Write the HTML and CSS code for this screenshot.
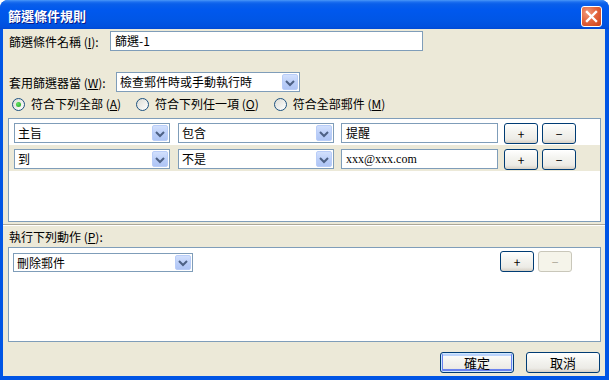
FILE: index.html
```html
<!DOCTYPE html>
<html lang="zh-Hant">
<head>
    <meta charset="UTF-8">
    <title>篩選條件規則</title>
    <link rel="stylesheet" href="styles.css">
</head>
<body>

<div class="window">
    <div class="titlebar">
        <span class="title">篩選條件規則</span>
        <span class="close">
            <svg width="19" height="19" viewBox="0 0 19 19"><path d="M5 5 L14 14 M14 5 L5 14" stroke="#fff" stroke-width="2.4" stroke-linecap="square"/></svg>
        </span>
    </div>

    <div class="client">
        <div class="row name-row">
            <label class="name-label">篩選條件名稱 (<u>I</u>):</label>
            <div class="textbox name-box">篩選-1</div>
        </div>

        <div class="row when-row">
            <label class="when-label">套用篩選器當 (<u>W</u>):</label>
            <div class="combo when-combo">
                <span class="combo-text">檢查郵件時或手動執行時</span>
                <span class="combo-btn"><svg width="14" height="15" viewBox="0 0 14 15"><polyline points="3,6 7,10 11,6" fill="none" stroke="#4d6185" stroke-width="2"/></svg></span>
            </div>
        </div>

        <div class="radios">
            <span class="radio-item"><span class="radio checked"></span>符合下列全部 (<u>A</u>)</span>
            <span class="radio-item"><span class="radio"></span>符合下列任一項 (<u>O</u>)</span>
            <span class="radio-item"><span class="radio"></span>符合全部郵件 (<u>M</u>)</span>
        </div>

        <div class="listbox conditions">
            <div class="cond">
                <div class="combo field">
                    <span class="combo-text">主旨</span>
                    <span class="combo-btn"><svg width="14" height="15" viewBox="0 0 14 15"><polyline points="3,6 7,10 11,6" fill="none" stroke="#4d6185" stroke-width="2"/></svg></span>
                </div>
                <div class="combo field second">
                    <span class="combo-text">包含</span>
                    <span class="combo-btn"><svg width="14" height="15" viewBox="0 0 14 15"><polyline points="3,6 7,10 11,6" fill="none" stroke="#4d6185" stroke-width="2"/></svg></span>
                </div>
                <div class="textbox value">提醒</div>
                <button class="btn small plus">+</button>
                <button class="btn small minus">−</button>
            </div>
            <div class="cond alt">
                <div class="combo field">
                    <span class="combo-text">到</span>
                    <span class="combo-btn"><svg width="14" height="15" viewBox="0 0 14 15"><polyline points="3,6 7,10 11,6" fill="none" stroke="#4d6185" stroke-width="2"/></svg></span>
                </div>
                <div class="combo field second">
                    <span class="combo-text">不是</span>
                    <span class="combo-btn"><svg width="14" height="15" viewBox="0 0 14 15"><polyline points="3,6 7,10 11,6" fill="none" stroke="#4d6185" stroke-width="2"/></svg></span>
                </div>
                <div class="textbox value latin">xxx@xxx.com</div>
                <button class="btn small plus">+</button>
                <button class="btn small minus">−</button>
            </div>
        </div>

        <div class="splitter"></div>

        <div class="action-label">執行下列動作 (<u>P</u>):</div>

        <div class="listbox actions">
            <div class="action">
                <div class="combo action-combo">
                    <span class="combo-text">刪除郵件</span>
                    <span class="combo-btn"><svg width="14" height="15" viewBox="0 0 14 15"><polyline points="3,6 7,10 11,6" fill="none" stroke="#4d6185" stroke-width="2"/></svg></span>
                </div>
                <button class="btn small plus action-plus">+</button>
                <button class="btn small minus" disabled>−</button>
            </div>
        </div>

        <div class="footer">
            <button class="btn wide default">確定</button>
            <button class="btn wide">取消</button>
        </div>
    </div>
</div>

</body>
</html>
```

FILE: styles.css
```css
* { box-sizing: border-box; }

body {
    margin: 0;
    background: #fff;
    font-family: "Noto Sans CJK TC", "Liberation Sans", sans-serif;
    font-size: 12px;
    color: #000;
}

u { text-decoration: underline; text-underline-offset: 1px; }

/* window frame */
.window {
    width: 609px;
    height: 380px;
    display: flex;
    flex-direction: column;
    background: #0055e5;
    border-radius: 8px 8px 0 0;
    overflow: hidden;
}

.titlebar {
    height: 29px;
    flex: none;
    display: flex;
    align-items: flex-start;
    padding: 0 7px 0 8px;
    background: linear-gradient(to bottom, #4a98f8 0, #1c6ff0 2px, #0a5fea 4px, #0058ee 10px, #0056e6 20px, #0050de 27px, #0049d4 29px);
}

.title {
    flex: 1;
    margin-top: 7px;
    line-height: 17px;
    font-size: 13px;
    font-weight: bold;
    color: #fff;
    text-shadow: 1px 1px 0 #0a1a8a;
}

.close {
    width: 21px;
    height: 21px;
    margin-top: 6px;
    border: 1px solid #fff;
    border-radius: 3px;
    background: radial-gradient(circle at 30% 30%, #f09a7c 0, #e4663e 45%, #cc4018 100%);
    display: flex;
    align-items: center;
    justify-content: center;
}

.client {
    flex: 1;
    margin: 0 4px 4px 3px;
    background: #ece9d8;
    display: flex;
    flex-direction: column;
}

/* top fields */
.row {
    display: flex;
    align-items: center;
    padding-left: 6px;
}

.name-row { margin-top: 2px; height: 20px; }
.name-label { width: 101px; }
.name-box { width: 313px; height: 20px; }

.when-row { margin-top: 21px; height: 20px; }
.when-label { width: 107px; }
.when-combo { width: 184px; height: 20px; }

.textbox {
    border: 1px solid #7f9db9;
    background: #fff;
    padding-left: 4px;
    line-height: 18px;
    white-space: nowrap;
}

.latin { font-family: "Liberation Serif", serif; }

.combo {
    display: flex;
    border: 1px solid #7f9db9;
    background: #fff;
    padding: 1px;
}

.combo-text {
    flex: 1;
    padding-left: 2px;
    line-height: 16px;
    white-space: nowrap;
}

.combo-btn {
    width: 16px;
    flex: none;
    display: flex;
    align-items: center;
    justify-content: center;
    border: 1px solid #b9cdf8;
    border-radius: 2px;
    background: linear-gradient(to bottom, #d2e0fd, #b9cdf8 60%, #afc5f5);
}

/* radios */
.radios {
    margin-top: 5px;
    height: 14px;
    display: flex;
    align-items: center;
    padding-left: 9px;
}

.radio-item {
    display: flex;
    align-items: center;
    margin-right: 15px;
    line-height: 14px;
}

.radio {
    width: 13px;
    height: 13px;
    margin-right: 6px;
    border: 1px solid #1c5180;
    border-radius: 50%;
    background: linear-gradient(135deg, #dcdcd5, #fff);
    display: flex;
    align-items: center;
    justify-content: center;
}

.radio.checked::after {
    content: "";
    width: 5px;
    height: 5px;
    border-radius: 50%;
    background: radial-gradient(circle at 35% 35%, #62e262, #21a121);
}

/* list boxes */
.listbox {
    margin: 0 4px 0 5px;
    border: 1px solid #7f9db9;
    background: #fff;
}

.conditions { margin-top: 7px; height: 104px; }

.cond {
    height: 26px;
    display: flex;
    align-items: flex-start;
    padding: 4px 0 0 5px;
}

.cond.alt { background: #ece9d8; }

.field { width: 156px; height: 20px; }
.field.second { margin-left: 8px; }
.value { width: 157px; height: 20px; margin-left: 7px; }

.splitter {
    margin-top: 2px;
    height: 2px;
    border-top: 1px solid #aca899;
    border-bottom: 1px solid #fff;
}

.action-label {
    margin-top: 4px;
    height: 14px;
    line-height: 14px;
    padding-left: 6px;
}

.actions { margin-top: 3px; height: 95px; }

.action {
    display: flex;
    align-items: flex-start;
    padding: 3px 0 0 4px;
}

.action-combo { width: 180px; height: 19px; margin-top: 2px; }
.action-combo .combo-text { line-height: 15px; }
.action .btn.action-plus { margin-left: 307px; }

/* buttons */
.btn {
    font: inherit;
    color: #000;
    padding: 0;
    border: 1px solid #003c74;
    border-radius: 3px;
    background: linear-gradient(to bottom, #fff 0, #f4f4f0 40%, #ecebe6 80%, #d6d0c5 100%);
    cursor: pointer;
    line-height: 18px;
}

.btn.small { width: 34px; height: 21px; }
.btn.plus { margin-left: 6px; }
.btn.minus { margin-left: 4px; }

.btn:disabled {
    border-color: #c9c7ba;
    background: #f5f4ea;
    color: #aca899;
}

.footer {
    margin-top: 10px;
    display: flex;
    justify-content: flex-end;
    gap: 12px;
    padding-right: 5px;
}

.btn.wide { width: 74px; height: 21px; font-size: 13px; }

.btn.default {
    box-shadow: inset 0 0 0 1px #cee7ff, inset 0 -1px 0 2px #6982ee, inset 0 1px 0 2px #bad3fc;
}
```
